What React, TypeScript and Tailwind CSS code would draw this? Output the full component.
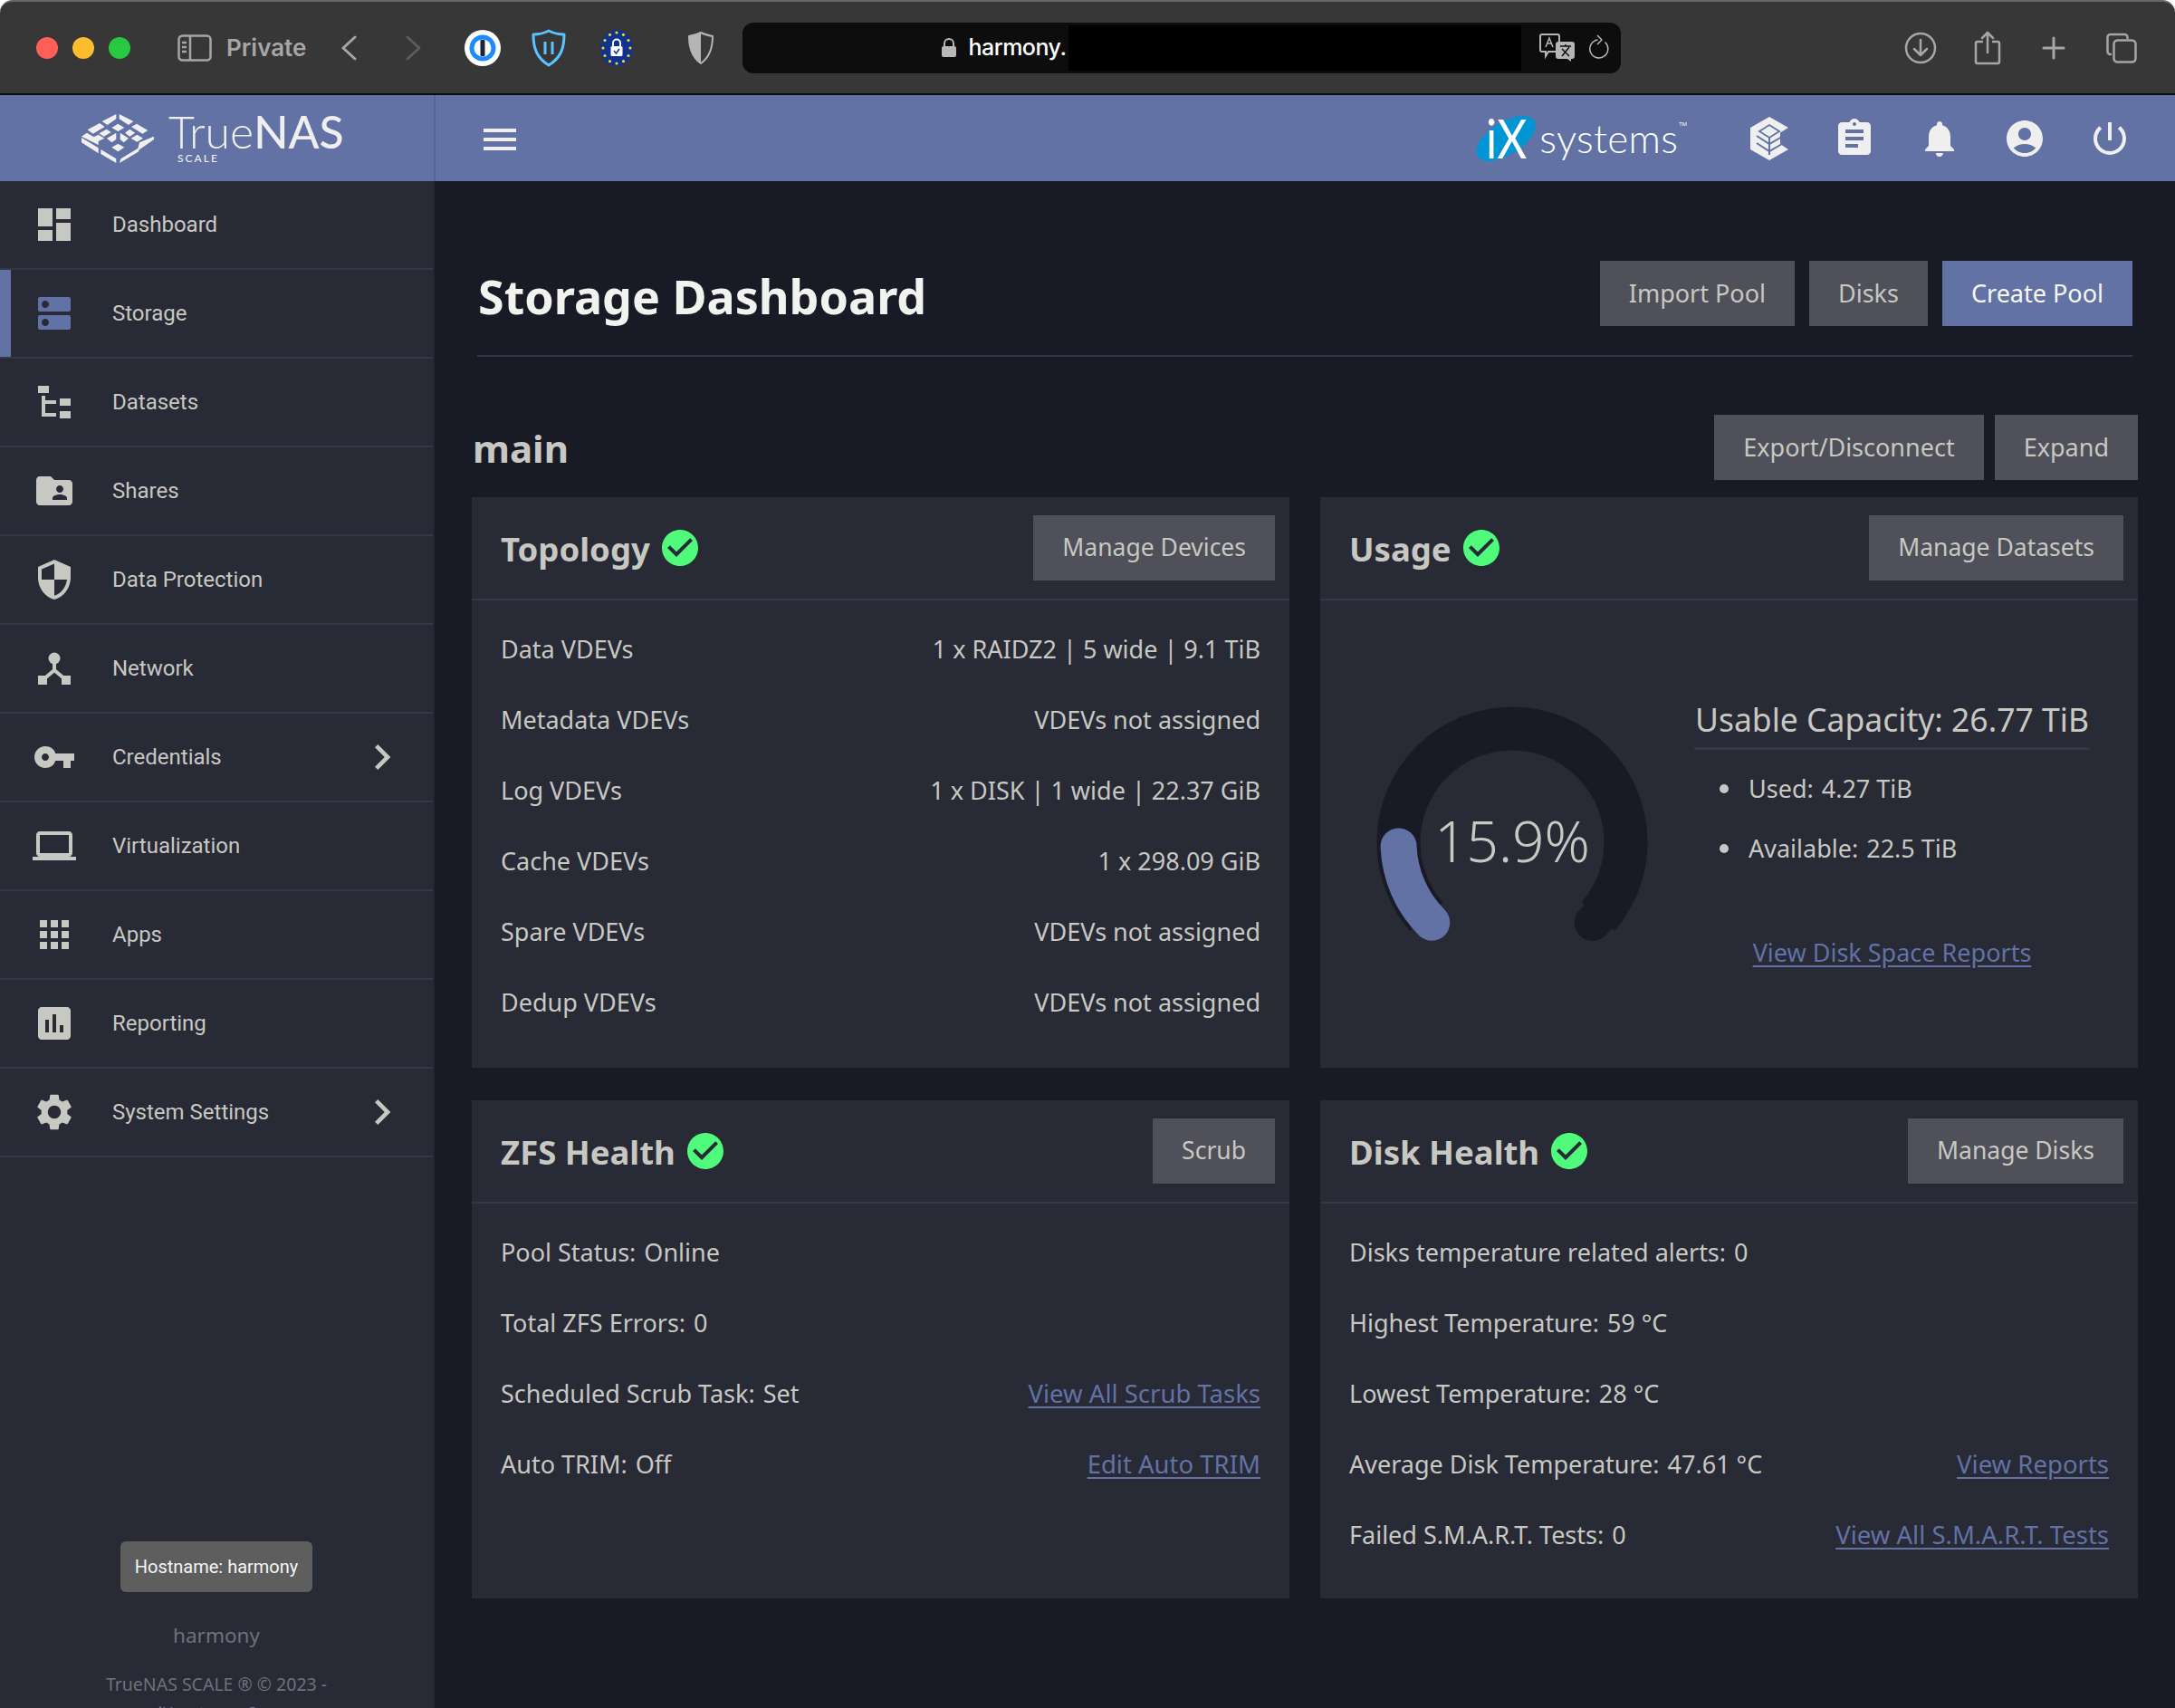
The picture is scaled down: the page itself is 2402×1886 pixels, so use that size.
import React from "react";
import {
  MdDashboard, MdDns, MdFolderShared, MdSecurity, MdVpnKey, MdLaptop, MdApps, MdAssessment, MdSettings,
  MdChevronRight, MdMenu, MdAssignment, MdNotifications, MdAccountCircle, MdPowerSettingsNew, MdCheckCircle,
} from "react-icons/md";

function DatasetsIcon() {
  return (
    <svg viewBox="0 0 48 48" className="w-12 h-12" fill="currentColor">
      <rect x="6" y="6" width="12" height="8" />
      <rect x="10" y="17" width="4" height="23" />
      <rect x="10" y="22" width="16" height="4" />
      <rect x="10" y="36" width="16" height="4" />
      <rect x="30" y="20" width="12" height="8" />
      <rect x="30" y="34" width="12" height="8" />
    </svg>
  );
}

function NetworkIcon() {
  return (
    <svg viewBox="0 0 48 48" className="w-12 h-12" fill="currentColor">
      <circle cx="24" cy="13" r="6.5" />
      <path d="M24 14v12L11 37M24 26l13 11" stroke="currentColor" strokeWidth="4" fill="none" />
      <rect x="6" y="32" width="10" height="10" />
      <rect x="32" y="32" width="10" height="10" />
    </svg>
  );
}

function TrueNasMark() {
  const polys = [
    "128,72 175,48 175,64 146,84",
    "185,48 232,72 216,84 185,64",
    "160,93 181,80 202,93 181,105",
    "80,100 120,78 137,90 98,113",
    "225,90 243,80 280,102 262,113",
    "143,98 158,108 134,122 118,112",
    "204,110 220,98 238,110 220,122",
    "60,122 78,110 116,133 116,150",
    "96,126 116,116 136,128 116,138",
    "144,128 175,110 175,132 160,142",
    "188,110 216,128 200,142 188,132",
    "224,128 244,116 264,128 244,140",
    "252,142 300,122 300,132 245,170",
    "60,126 116,160 116,178 60,142",
    "124,165 175,196 175,210 124,180",
    "160,158 181,146 202,158 181,172",
    "190,196 250,160 250,172 186,210",
  ];
  return (
    <svg viewBox="60 48 240 162" className="w-20 h-[54px]" fill="#f0f0f0">
      {polys.map((p) => (
        <polygon key={p} points={p} />
      ))}
    </svg>
  );
}

function TrueCommandIcon() {
  return (
    <svg viewBox="0 0 42 48" className="w-[42px] h-12">
      <path fill="#efefef" d="M21 0 42 12 33 17.500V30L42 36 21 48 0 36V12Z" />
      <path fill="none" stroke="#6272a4" strokeWidth="1.8" d="M21 9 32 16 21 23 10 16Z" />
      <path fill="none" stroke="#6272a4" strokeWidth="2" d="M7 21 21 30 34 22.500M7 29 21 38 34 30.500M21 23V42" />
    </svg>
  );
}

const NAV: [string, React.ReactNode, boolean?][] = [
  ["Dashboard", <MdDashboard size={48} />],
  ["Storage", <MdDns size={48} />],
  ["Datasets", <DatasetsIcon />],
  ["Shares", <MdFolderShared size={48} />],
  ["Data Protection", <MdSecurity size={48} />],
  ["Network", <NetworkIcon />],
  ["Credentials", <MdVpnKey size={48} />, true],
  ["Virtualization", <MdLaptop size={48} />],
  ["Apps", <MdApps size={48} />],
  ["Reporting", <MdAssessment size={48} />],
  ["System Settings", <MdSettings size={48} />, true],
];

function BrowserBar() {
  return (
    <div className="bg-white shrink-0">
      <div className="h-[105px] bg-[#373737] rounded-t-[14px] border-t-2 border-[#666666] border-b-2 border-b-[#0c0c0c] flex items-center relative">
        <div className="flex items-center gap-4 ml-10">
          <span className="w-6 h-6 rounded-full bg-[#ff5f57]" />
          <span className="w-6 h-6 rounded-full bg-[#febc2e]" />
          <span className="w-6 h-6 rounded-full bg-[#28c840]" />
        </div>
        <svg viewBox="0 0 38 30" className="w-[38px] h-[30px] ml-[52px]" fill="none" stroke="#a6a6a6" strokeWidth="2.5">
          <rect x="1.5" y="1.5" width="35" height="27" rx="4" />
          <path d="M14 2v26M5 9h5M5 14h5M5 19h5" />
        </svg>
        <span className="ml-4 text-[26px] font-semibold text-[#a6a6a6] font-['Inter',sans-serif]">Private</span>
        <svg viewBox="0 0 18 28" className="w-[18px] h-7 ml-[38px]" fill="none" stroke="#a6a6a6" strokeWidth="3" strokeLinecap="round" strokeLinejoin="round">
          <path d="M16 2 3 14l13 12" />
        </svg>
        <svg viewBox="0 0 18 28" className="w-[18px] h-7 ml-[54px]" fill="none" stroke="#5d5d5d" strokeWidth="3" strokeLinecap="round" strokeLinejoin="round">
          <path d="M2 2l13 12L2 26" />
        </svg>
        <svg viewBox="0 0 40 40" className="w-10 h-10 ml-[47px]">
          <circle cx="20" cy="20" r="20" fill="#fff" />
          <circle cx="20" cy="20" r="14.5" fill="#1a8cff" />
          <circle cx="20" cy="20" r="9.5" fill="#fff" />
          <rect x="17.5" y="11" width="5" height="18" rx="1" fill="#1c2434" />
        </svg>
        <svg viewBox="0 0 38 42" className="w-[38px] h-[42px] ml-[34px]" fill="none" stroke="#5cc3ff" strokeWidth="3">
          <path d="M19 2c6 3 11 4 17 4 0 16-4 26-17 34C6 32 2 22 2 6c6 0 11-1 17-4Z" strokeLinejoin="round" />
          <path d="M15 14v14M23 14v14" />
        </svg>
        <svg viewBox="0 0 36 40" className="w-9 h-10 ml-[38px]">
          <ellipse cx="18" cy="20" rx="18" ry="20" fill="#10338f" />
          {[0, 30, 60, 90, 120, 150, 180, 210, 240, 270, 300, 330].map((a) => (
            <circle key={a} cx={18 + 15 * Math.sin((a * Math.PI) / 180)} cy={20 - 17 * Math.cos((a * Math.PI) / 180)} r="1.6" fill="#ffd21e" />
          ))}
          <rect x="11.5" y="18" width="13" height="11" rx="1.5" fill="#fff" />
          <path d="M14 18v-3.500a4 4 0 0 1 8 0V18" fill="none" stroke="#fff" strokeWidth="2" />
          <path d="M15 23l2.500 3 3.500-5" fill="none" stroke="#10338f" strokeWidth="1.5" />
        </svg>
        <svg viewBox="0 0 28 36" className="w-7 h-9 ml-[61px]">
          <path d="M14 1c4 2 8 3 13 4 0 13-3 23-13 30C4 28 1 18 1 5c5-1 9-2 13-4Z" fill="#383838" stroke="#b5b5b5" strokeWidth="2" />
          <path d="M14 1c-4 2-8 3-13 4 0 13 3 23 13 30Z" fill="#b5b5b5" />
        </svg>
        <div className="ml-[32px] w-[970px] h-14 rounded-[12px] bg-[#0d0d0d] relative flex items-center overflow-hidden">
          <svg viewBox="0 0 18 22" className="w-[18px] h-[22px] ml-[219px]" fill="#b8b8b8">
            <path d="M4 10V6a5 5 0 0 1 10 0v4" fill="none" stroke="#b8b8b8" strokeWidth="2" />
            <rect x="1" y="9" width="16" height="12" rx="2" />
          </svg>
          <span className="ml-3 text-[25px] font-medium tracking-[-0.5px] text-white font-['Inter',sans-serif]">harmony.</span>
          <div className="absolute left-[360px] top-[3px] w-[500px] h-[50px] bg-black" />
          <svg viewBox="0 0 40 32" className="absolute left-[880px] top-3 w-10 h-8">
            <path d="M3 1h17a2 2 0 0 1 2 2v15a2 2 0 0 1-2 2H10l-3 5v-5H3a2 2 0 0 1-2-2V3a2 2 0 0 1 2-2Z" fill="none" stroke="#b5b5b5" strokeWidth="2" />
            <path d="M7 15l4-10 4 10M9 11h4" fill="none" stroke="#b5b5b5" strokeWidth="1.5" />
            <path d="M21 9h15a3 3 0 0 1 3 3v13a3 3 0 0 1-3 3h-1v3l-4-3H21a3 3 0 0 1-3-3V12a3 3 0 0 1 3-3Z" fill="#b5b5b5" />
            <path d="M23 14h12M29 12v2M25 25l8-10M33 25l-8-8" stroke="#0d0d0d" strokeWidth="1.5" fill="none" />
          </svg>
          <svg viewBox="0 0 24 30" className="absolute left-[935px] top-[12px] w-6 h-[30px]" fill="none" stroke="#b5b5b5" strokeWidth="1.5">
            <path d="M17.500 9.500a10 10 0 1 1-8-2.500" />
            <path d="M9 2l5 5-5 5" strokeLinejoin="round" />
          </svg>
        </div>
        <svg viewBox="0 0 36 36" className="w-9 h-9 ml-[313px]" fill="none" stroke="#a6a6a6" strokeWidth="2.5">
          <circle cx="18" cy="18" r="16" />
          <path d="M18 9v17M11 19l7 7 7-7" strokeLinecap="round" strokeLinejoin="round" />
        </svg>
        <svg viewBox="0 0 30 38" className="w-[30px] h-[38px] ml-[41px]" fill="none" stroke="#a6a6a6" strokeWidth="2.5">
          <path d="M10 12H4a2 2 0 0 0-2 2v20a2 2 0 0 0 2 2h22a2 2 0 0 0 2-2V14a2 2 0 0 0-2-2h-6" />
          <path d="M15 24V2M9 8l6-6 6 6" strokeLinecap="round" strokeLinejoin="round" />
        </svg>
        <svg viewBox="0 0 26 26" className="w-[26px] h-[26px] ml-[45px]" fill="none" stroke="#a6a6a6" strokeWidth="3" strokeLinecap="round">
          <path d="M13 2v22M2 13h22" />
        </svg>
        <svg viewBox="0 0 34 34" className="w-[34px] h-[34px] ml-[45px]" fill="none" stroke="#a6a6a6" strokeWidth="2.5">
          <path d="M6 24H4.500a3 3 0 0 1-3-3V5a3 3 0 0 1 3-3h16a3 3 0 0 1 3 3v2" />
          <rect x="8.500" y="8.500" width="24" height="24" rx="4" />
        </svg>
      </div>
    </div>
  );
}

function TopBar() {
  return (
    <div className="h-[95px] bg-[#6272a4] shrink-0 flex items-center text-[#efefef]">
      <div className="w-[481px] h-full border-r-2 border-[#58678f] flex items-center pl-[90px] gap-4">
        <TrueNasMark />
        <div className="flex flex-col items-start -mt-[2px]">
          <div className="text-[50px] leading-[46px] font-['Lato',sans-serif]">
            <span className="font-light">True</span>
            <span className="font-medium">NAS</span>
          </div>
          <div className="text-[12px] leading-3 font-medium tracking-[2px] ml-[10px] mt-[1px] font-['Lato',sans-serif]">SCALE</div>
        </div>
      </div>
      <MdMenu size={48} className="ml-[47px] mt-[2px]" />
      <div className="ml-auto flex items-center">
        <div className="flex items-center relative">
          <svg viewBox="0 0 70 50" className="w-[70px] h-[50px] overflow-visible">
            <ellipse cx="38" cy="25" rx="37" ry="18" fill="#0095d5" transform="rotate(-32 38 25)" />
            <text transform="translate(16 47) scale(0.85 1)" fill="#fff" fontSize="60" fontFamily="Lato, sans-serif" fontWeight="400">iX</text>
          </svg>
          <span className="ml-[5px] -mt-[2px] text-[44px] leading-none font-light text-white font-['Lato',sans-serif] tracking-[0.3px]">systems</span>
          <span className="ml-[1px] self-start mt-[6px] text-[6px] leading-none text-white">TM</span>
        </div>
        <div className="ml-[70px] flex items-center">
          <div className="w-[42px] h-12"><TrueCommandIcon /></div>
          <MdAssignment size={48} className="ml-[49px]" />
          <MdNotifications size={48} className="ml-[46px]" />
          <MdAccountCircle size={48} className="ml-[46px]" />
          <MdPowerSettingsNew size={48} className="ml-[46px] mr-[48px]" />
        </div>
      </div>
    </div>
  );
}

function Sidebar() {
  return (
    <div className="w-[480px] shrink-0 bg-[#282a36] border-r-2 border-r-[#232530] text-[#c8c8c2]">
      {NAV.map(([label, icon, chevron]) => {
        const active = label === "Storage";
        return (
          <div key={label} className={`h-[98px] border-b-2 border-[#343746] flex items-center relative ${active ? "text-[#6272a4]" : ""}`}>
            {active && <div className="absolute left-0 top-0 bottom-0 w-3 bg-[#6272a4]" />}
            <span className="w-12 h-12 ml-9 flex items-center justify-center">{icon}</span>
            <span className="ml-10 -mt-[1px] text-[24px] text-[#c8c8c2] font-['Roboto',sans-serif]">{label}</span>
            {chevron && <MdChevronRight size={56} className="absolute left-[394px] text-[#c8c8c2]" />}
          </div>
        );
      })}
      <div className="mt-[424px] flex flex-col items-center">
        <div className="w-[212px] h-14 rounded-[6px] bg-[#5e5e5e] text-[#f5f5f5] text-[20px] flex items-center justify-center font-['Roboto',sans-serif]">Hostname: harmony</div>
        <div className="mt-[32px] text-[22.5px] leading-8 text-[#6f717b]">harmony</div>
        <div className="mt-[22px] w-[330px] text-center text-[19.5px] leading-[32px] text-[#6f717b]">
          TrueNAS SCALE ® © 2023 <span className="text-[#6272a4]">- iXsystems, Inc</span>
        </div>
      </div>
    </div>
  );
}

function Btn({ children, primary, size = "big" }: { children: React.ReactNode; primary?: boolean; size?: "big" | "card" }) {
  return (
    <div className={`h-[72px] px-8 flex items-center ${size === "big" ? "text-[27px]" : "text-[26.5px]"} ${primary ? "bg-[#6272a4] text-[#f8f8f2]" : "bg-[#4f5059] text-[#c8c8c2]"}`}>
      {children}
    </div>
  );
}

function Card({ title, action, children }: { title: string; action: string; children: React.ReactNode }) {
  return (
    <div className="bg-[#282a36] flex flex-col">
      <div className="h-[114px] shrink-0 border-b-2 border-[#343746] flex items-center pl-8 pr-4">
        <span className="mt-[2px] text-[36.5px] font-bold text-[#c8c8c2]">{title}</span>
        <MdCheckCircle size={48} className="ml-[9px] text-[#50fa7b]" />
        <div className="ml-auto"><Btn size="card">{action}</Btn></div>
      </div>
      {children}
    </div>
  );
}

function Row({ left, val, value, link }: { left: string; val?: string; value?: string; link?: string }) {
  return (
    <div className="h-[78px] flex items-center justify-between text-[27px] text-[#c8c8c2]">
      <span className="flex gap-[9px]">
        <span>{left}</span>
        {val && <span>{val}</span>}
      </span>
      {value && <span>{value}</span>}
      {link && <span className="text-[27.5px] text-[#6272a4] underline underline-offset-4">{link}</span>}
    </div>
  );
}

function Gauge() {
  const cx = 150, cy = 150, r = 125.5;
  const p = (deg: number) => {
    const a = (deg * Math.PI) / 180;
    return `${cx + r * Math.sin(a)} ${cy - r * Math.cos(a)}`;
  };
  const arc = (from: number, to: number) => `M${p(from)}A${r} ${r} 0 ${to - from > 180 ? 1 : 0} 1 ${p(to)}`;
  return (
    <svg viewBox="0 0 300 300" className="w-[300px] h-[300px] shrink-0 overflow-visible" fill="none">
      <path d={arc(229, 491)} stroke="#181a26" strokeWidth="48" />
      <path d={arc(225, 495)} stroke="#181a26" strokeWidth="40" strokeLinecap="round" />
      <path d={arc(225, 268)} stroke="#6272a4" strokeWidth="40" strokeLinecap="round" />
      <text x="150" y="172" textAnchor="middle" fontSize="62" fill="#c8c8c2" fontFamily="Noto Sans, sans-serif" fontWeight="300">15.9%</text>
    </svg>
  );
}

export default function App() {
  return (
    <div className="w-[2402px] h-[1886px] overflow-hidden flex flex-col bg-[#181a26] font-['Noto_Sans',sans-serif]">
      <BrowserBar />
      <TopBar />
      <div className="flex flex-1 min-h-0">
        <Sidebar />
        <div className="flex-1 min-w-0 pt-[88px]">
          <div className="mx-[47px] pb-[32px] border-b-2 border-[#343746] flex items-center">
            <h1 className="ml-[1px] mt-[6px] text-[52px] leading-none font-bold text-[#f2f2ee]">Storage Dashboard</h1>
            <div className="ml-auto flex gap-4">
              <Btn>Import Pool</Btn>
              <Btn>Disks</Btn>
              <Btn primary>Create Pool</Btn>
            </div>
          </div>
          <div className="mx-[41px] mt-[64px]">
            <div className="flex items-center h-[72px] mb-[19px]">
              <span className="ml-[1px] text-[42px] font-bold text-[#c8c8c2]">main</span>
              <div className="ml-auto flex gap-3">
                <Btn>Export/Disconnect</Btn>
                <Btn>Expand</Btn>
              </div>
            </div>
            <div className="grid grid-cols-2 gap-x-[34px] gap-y-[36px]">
              <div className="h-[630px] bg-[#282a36]">
                <Card title="Topology" action="Manage Devices">
                  <div className="px-8 pt-[15px]">
                    <Row left="Data VDEVs" value="1 x RAIDZ2 | 5 wide | 9.1 TiB" />
                    <Row left="Metadata VDEVs" value="VDEVs not assigned" />
                    <Row left="Log VDEVs" value="1 x DISK | 1 wide | 22.37 GiB" />
                    <Row left="Cache VDEVs" value="1 x 298.09 GiB" />
                    <Row left="Spare VDEVs" value="VDEVs not assigned" />
                    <Row left="Dedup VDEVs" value="VDEVs not assigned" />
                  </div>
                </Card>
              </div>
              <div className="h-[630px] bg-[#282a36]">
                <Card title="Usage" action="Manage Datasets">
                  <div className="flex items-start pl-[62px] pt-[117px]">
                    <Gauge />
                    <div className="ml-[51px] w-[437px] text-[27px] text-[#c8c8c2] -mt-[4px]">
                      <div className="h-[52px] flex items-center justify-center border-b-[3px] border-[#343746] text-[35.5px] leading-none whitespace-nowrap pb-3">Usable Capacity: 26.77 TiB</div>
                      <div className="mt-[21px] flex items-center h-[44px]"><span className="ml-[28px] w-2.5 h-2.5 rounded-full bg-[#c8c8c2]" /><span className="ml-[22px] flex gap-[9px]"><span>Used:</span><span>4.27 TiB</span></span></div>
                      <div className="mt-[22px] flex items-center h-[44px]"><span className="ml-[28px] w-2.5 h-2.5 rounded-full bg-[#c8c8c2]" /><span className="ml-[22px] flex gap-[9px]"><span>Available:</span><span>22.5 TiB</span></span></div>
                      <div className="mt-[73px] text-center text-[#6272a4] underline underline-offset-4">View Disk Space Reports</div>
                    </div>
                  </div>
                </Card>
              </div>
              <div className="h-[550px] bg-[#282a36]">
                <Card title="ZFS Health" action="Scrub">
                  <div className="px-8 pt-[15px]">
                    <Row left="Pool Status:" val="Online" />
                    <Row left="Total ZFS Errors:" val="0" />
                    <Row left="Scheduled Scrub Task:" val="Set" link="View All Scrub Tasks" />
                    <Row left="Auto TRIM:" val="Off" link="Edit Auto TRIM" />
                  </div>
                </Card>
              </div>
              <div className="h-[550px] bg-[#282a36]">
                <Card title="Disk Health" action="Manage Disks">
                  <div className="px-8 pt-[15px]">
                    <Row left="Disks temperature related alerts:" val="0" />
                    <Row left="Highest Temperature:" val="59 °C" />
                    <Row left="Lowest Temperature:" val="28 °C" />
                    <Row left="Average Disk Temperature:" val="47.61 °C" link="View Reports" />
                    <Row left="Failed S.M.A.R.T. Tests:" val="0" link="View All S.M.A.R.T. Tests" />
                  </div>
                </Card>
              </div>
            </div>
          </div>
        </div>
      </div>
    </div>
  );
}
